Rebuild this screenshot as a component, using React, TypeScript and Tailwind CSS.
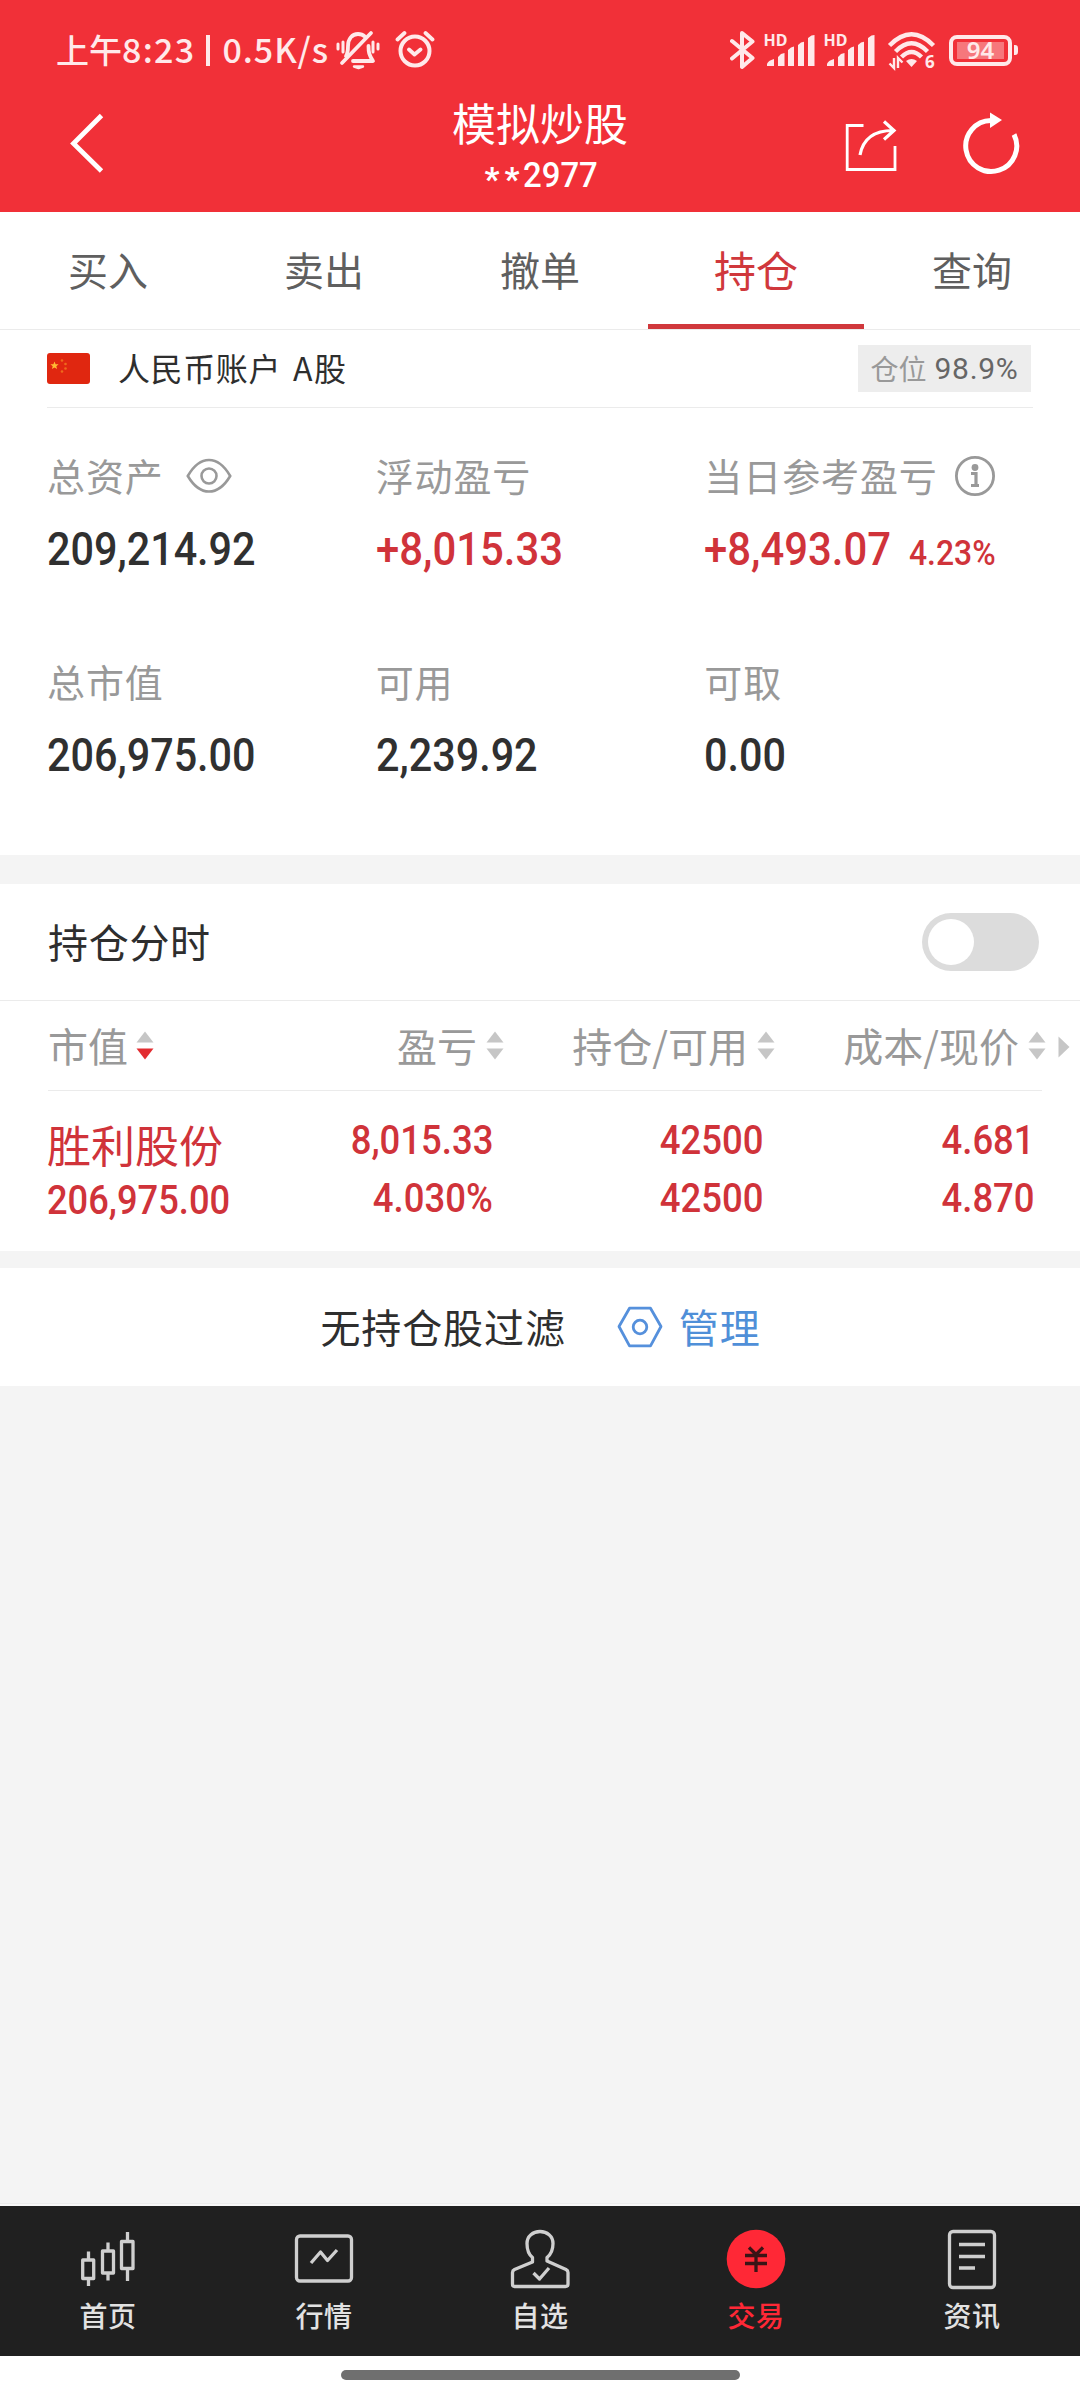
import type { ReactNode } from 'react';

const CJK = "font-['Noto_Sans_CJK_SC',sans-serif]";
const NUM = "font-[Roboto,'Noto_Sans_CJK_SC',sans-serif]";

function StatusBar() {
  return (
    <div className="flex h-[100px] items-center pl-[56px] pr-[62px] text-[#ffe9ea]">
      <div className="-mt-[2px] flex h-[50px] w-[273px] items-center whitespace-nowrap text-[34px] leading-[50px] font-medium">
        <span className="text-[33px]">上午</span>
        <span className="tracking-[1.300px]">8:23</span>
        <span className="mt-[2px] ml-[11px] h-[31px] w-[4px] bg-[#ffe9ea]" />
        <span className="ml-auto tracking-[0.900px]">0.5K/s</span>
      </div>
      <svg className="ml-[7px] h-[40px] w-[44px]" viewBox="0 0 44 40" fill="none" stroke="currentColor" strokeWidth="3.800" strokeLinecap="round" strokeLinejoin="round">
        <path d="M2 14v5M7 12v10M37 12v10M42 14v5" strokeWidth="3" />
        <path d="M10 26c2-3 2-6 2-10 0-7 4-12 10-12 3 0 5 .8 7 2.600" />
        <path d="M32.500 16c0 6 .5 9 4.500 15H17" />
        <path d="M35 3L6 33" />
        <path d="M18 36.500h9l-4.500 1.500z" strokeWidth="2.400" fill="currentColor" />
      </svg>
      <svg className="ml-[15px] h-[40px] w-[40px]" viewBox="0 0 40 40" fill="none" stroke="currentColor" strokeWidth="4" strokeLinecap="round" strokeLinejoin="round">
        <circle cx="20" cy="21" r="14.500" />
        <path d="M14 19.500l5.500 5 6-5M2.500 9.500l7-6.500M37.500 9.500l-7-6.500" strokeWidth="3.800" />
      </svg>
      <svg className="ml-auto h-[40px] w-[25px]" viewBox="0 0 25 40" fill="none" stroke="currentColor" strokeWidth="4" strokeLinecap="round" strokeLinejoin="round">
        <path d="M2 11l20.500 17L12 37V3l10.500 8.500L2 28.500" />
      </svg>
      <Signal className="ml-[10px]" />
      <Signal className="ml-[9px]" />
      <svg className="ml-[12px] h-[40px] w-[48px] overflow-visible" viewBox="0 0 48 40" fill="none" stroke="currentColor" strokeWidth="4.400">
        <path d="M1.500 15.500Q23.500-7 45.500 15.500" />
        <path d="M7.500 21.500Q23.500 5 39.500 21.500" />
        <path d="M13.500 27Q23.500 17 33.500 27" />
        <path d="M18 31Q23.500 27 29 31L23.500 37z" fill="currentColor" stroke="none" />
        <path d="M6 28v10L1.500 33.500M10 38V28l4.500 4.500" strokeWidth="2.400" />
        <text x="37" y="38" fontSize="17" fontWeight="700" fill="currentColor" stroke="none" fontFamily="Noto Sans">6</text>
      </svg>
      <div className="ml-[13px] flex h-[31px] w-[63px] items-center justify-center rounded-[8px] border-[4px] border-[#ffe9ea]">
        <span className="flex h-[17px] w-[47px] items-center justify-center bg-[#f6777c] font-['Noto_Sans',sans-serif] text-[24px] leading-none font-semibold">94</span>
      </div>
      <span className="ml-[2px] h-[10px] w-[4px] rounded-r-[3px] bg-[#ffe9ea]" />
    </div>
  );
}

function Signal({ className }: { className: string }) {
  return (
    <svg className={`${className} h-[40px] w-[51px] overflow-visible`} viewBox="0 0 51 40" fill="currentColor">
      <text x="-1.500" y="16" fontSize="16" fontWeight="700" fontFamily="Noto Sans">HD</text>
      <path d="M2 36V34q1-3.500 7-5v7zM13 36V27l3-3 3.500-1v13zM23 36V20l3-2.500 3-1V36zM33 36V15l3-2.500 3-.8V36zM43 36V8l3.500-2.500L49.500 5v31z" />
    </svg>
  );
}

function Header() {
  return (
    <header className="flex h-[212px] flex-col bg-[#f13038]">
      <StatusBar />
      <div className="flex h-[112px] pr-[59px] pl-[68px] text-white">
        <svg className="mt-[12px] h-[64px] w-[38px]" viewBox="0 0 38 64" fill="none" stroke="currentColor" strokeWidth="4.800">
          <path d="M33.500 3.500L5.500 31.500l28 27.500" />
        </svg>
        <div className="ml-[331px] w-[206px] text-center">
          <div className="text-[44px] leading-[44px] whitespace-nowrap">模拟炒股</div>
          <div className="mt-[10px] flex items-center justify-center font-[Roboto,sans-serif] text-[35px] leading-[36px] font-medium">
            <span className="w-[38px] pt-[8px] text-left text-[33px] font-bold tracking-[5px]">**</span>
            <span className="w-[73px] origin-left scale-x-[.94]">2977</span>
          </div>
        </div>
        <div className="mt-[11px] ml-auto flex">
          <svg className="mt-[6px] h-[58px] w-[54px]" viewBox="0 0 54 58" fill="none" stroke="currentColor" strokeWidth="2.800">
            <path d="M20.500 8.500H4.200V52.500H52V29" />
            <path d="M17 38C20 22 31 13.500 50 13.500M41 4.500l10 9-10 9" strokeWidth="3.200" />
          </svg>
          <svg className="ml-[64px] h-[66px] w-[60px]" viewBox="0 0 60 66" fill="none" stroke="currentColor" strokeWidth="5">
            <path d="M30 9.500A25.500 25.500 0 1 0 53 23.500" />
            <path d="M29 1.500L41 9 29 17z" fill="currentColor" stroke="none" />
          </svg>
        </div>
      </div>
    </header>
  );
}

function Tabs() {
  return (
    <nav className="grid h-[118px] grid-cols-5 border-b border-[#ebebeb] bg-white text-center text-[40px] leading-[115px] text-[#5f5f5f]">
      <span>买入</span>
      <span>卖出</span>
      <span>撤单</span>
      <span className="h-[117px] border-b-[5px] border-[#d0383c] text-[42px] leading-[113px] text-[#d0383c]">持仓</span>
      <span>查询</span>
    </nav>
  );
}

function AccountRow() {
  return (
    <div className="mx-[47px] flex h-[78px] items-center border-b border-[#ebebeb] text-[32px] text-[#2e2e2e]">
      <svg className="h-[31px] w-[43px]" viewBox="0 0 43 31">
        <rect width="43" height="31" rx="3" fill="#e02710" />
        <path d="M7.500 8.500l1.100 2.700 3 .1-2.300 1.900.8 2.900-2.600-1.600-2.600 1.600.8-2.900-2.300-1.900 3-.1z" fill="#fb3" />
        <g fill="#ee6a1c">
          <circle cx="15" cy="7.500" r="1.300" />
          <circle cx="18.500" cy="11" r="1.300" />
          <circle cx="18.500" cy="15.500" r="1.300" />
          <circle cx="15" cy="18.500" r="1.300" />
        </g>
      </svg>
      <span className="-mt-[3px] ml-[28px] flex items-center gap-[12px] tracking-[0.600px]">
        <span>人民币账户</span>
        <span className="tracking-[1.500px]">A股</span>
      </span>
      <span className="ml-auto mr-[2px] flex h-[47px] w-[173px] items-center justify-center gap-[8px] bg-[#ededed] text-[28px]">
        <span className="-mt-[2px] text-[#999]">仓位</span>
        <span className={`${NUM} text-[30px] tracking-[0.700px] text-[#666]`}>98.9%</span>
      </span>
    </div>
  );
}

function Metric({ label, value, extra, icon, red }: { label: string; value: string; extra?: string; icon?: ReactNode; red?: boolean }) {
  return (
    <div>
      <div className="flex h-[56px] items-center whitespace-nowrap">
        <span className="-mt-[3px] text-[38px] leading-[56px] tracking-[0.900px] text-[#999]">{label}</span>
        {icon}
      </div>
      <div className={`${NUM} mt-[18px] flex h-[54px] items-baseline text-[46px] leading-[54px] font-medium whitespace-nowrap ${red ? 'text-[#d0333a]' : 'text-[#303030]'}`}>
        <span className={red ? 'origin-left scale-x-[.91]' : 'origin-left scale-x-[.898]'}>{value}</span>
        {extra && <span className="-ml-[1px] origin-left scale-x-[.91] text-[35px]">{extra}</span>}
      </div>
    </div>
  );
}

function Metrics() {
  return (
    <section className="h-[447px] px-[47px] pt-[40px]">
      <div className="grid grid-cols-3 gap-y-[78px]">
        <Metric
          label="总资产"
          value="209,214.92"
          icon={
            <svg className="ml-[22px] h-[36px] w-[46px]" viewBox="0 0 46 36" fill="none" stroke="#999" strokeWidth="2.600">
              <path d="M1.800 18Q11 2 23 2t21.200 16Q35 33.500 23 33.500T1.800 18z" />
              <circle cx="23" cy="18" r="7.500" />
            </svg>
          }
        />
        <Metric label="浮动盈亏" value="+8,015.33" red />
        <Metric
          label="当日参考盈亏"
          value="+8,493.07"
          extra="4.23%"
          red
          icon={
            <svg className="ml-[16px] h-[42px] w-[42px]" viewBox="0 0 42 42" fill="none" stroke="#999" strokeWidth="2.800">
              <circle cx="21" cy="21" r="18.600" />
              <circle cx="21" cy="12.500" r="3.400" fill="#999" stroke="none" />
              <path d="M17 18.500h5v12M17 30.500h8" strokeWidth="3.200" />
            </svg>
          }
        />
        <Metric label="总市值" value="206,975.00" />
        <Metric label="可用" value="2,239.92" />
        <Metric label="可取" value="0.00" />
      </div>
    </section>
  );
}

function SortLabel({ label, down }: { label: string; down?: boolean }) {
  return (
    <span className={`flex items-center ${down ? 'justify-start gap-[8px]' : 'justify-end gap-[9px]'}`}>
      <span className="-mt-[2px]">{label}</span>
      <svg className="h-[30px] w-[18px]" viewBox="0 0 18 30" fill="#c6c6c6">
        <path d="M9 0.500l8.500 11h-17z" />
        <path d="M9 28.500l8.500-11h-17z" fill={down ? '#e22c30' : '#c6c6c6'} />
      </svg>
    </span>
  );
}

function Cell({ top, bottom }: { top: string; bottom: string }) {
  return (
    <div className={`${NUM} flex flex-col items-end text-[41px] leading-[58px] font-medium`}>
      <span className="origin-right scale-x-[.89]">{top}</span>
      <span className="origin-right scale-x-[.89]">{bottom}</span>
    </div>
  );
}

function Holdings() {
  return (
    <section className="bg-white">
      <div className="flex h-[117px] items-center justify-between border-b border-[#ebebeb] pr-[41px] pl-[48px] text-[40px] tracking-[0.700px] text-[#2e2e2e]">
        <span className="-mt-[2px]">持仓分时</span>
        <span className="mb-[1px] flex h-[58px] w-[117px] items-center rounded-full bg-[#dcdcdc] pl-[6px]">
          <span className="size-[46px] rounded-full bg-white" />
        </span>
      </div>
      <div className="flex h-[90px]">
        <div className="ml-[48px] grid w-[994px] grid-cols-[182px_274px_271px_271px] items-center border-b border-[#ebebeb] text-[40px] whitespace-nowrap text-[#999]">
          <SortLabel label="市值" down />
          <SortLabel label="盈亏" />
          <SortLabel label="持仓/可用" />
          <SortLabel label="成本/现价" />
        </div>
        <svg className="mt-[35px] ml-[16px] h-[22px] w-[12px]" viewBox="0 0 12 22" fill="#c6c6c6">
          <path d="M0.500 0.500L11.500 11 0.500 21.500z" />
        </svg>
      </div>
      <div className="grid h-[160px] grid-cols-[181px_265px_271px_271px] pt-[20px] pl-[47px] text-[#d0333a]">
        <div className="flex flex-col items-start whitespace-nowrap">
          <span className="mt-[4px] text-[44px] leading-[58px]">胜利股份</span>
          <span className={`${NUM} -mt-[2px] origin-left scale-x-[.885] text-[41px] leading-[58px] font-medium`}>206,975.00</span>
        </div>
        <Cell top="8,015.33" bottom="4.030%" />
        <Cell top="42500" bottom="42500" />
        <Cell top="4.681" bottom="4.870" />
      </div>
    </section>
  );
}

function FilterRow() {
  return (
    <div className="flex h-[118px] items-center justify-center bg-white pl-[1px] text-[40px] leading-[118px] tracking-[0.900px] text-[#2e2e2e]">
      <span className="-mt-[2px]">无持仓股过滤</span>
      <svg className="ml-[51px] h-[42px] w-[46px]" viewBox="0 0 46 42" fill="none" stroke="#5590dc" strokeWidth="2.800">
        <path d="M12.500 2.200h21L44 20.500 33.500 39.800h-21L2 20.500z" strokeLinejoin="round" />
        <circle cx="23" cy="21" r="6.800" />
      </svg>
      <span className="-mt-[2px] ml-[16px] text-[#4f8fd8]">管理</span>
    </div>
  );
}

function NavItem({ label, active, children }: { label: string; active?: boolean; children: ReactNode }) {
  return (
    <div className={`flex flex-col items-center ${active ? 'text-[#ff2836]' : 'text-[#cfcfcf]'}`}>
      <svg className="mt-[21px] size-[64px]" viewBox="0 0 64 64" fill="none" stroke="currentColor" strokeWidth="3.300" strokeLinejoin="round">
        {children}
      </svg>
      <span className={`mt-[4px] text-[28px] leading-[40px] font-medium tracking-[0.500px] ${active ? '' : 'text-[#e2e2e2]'}`}>{label}</span>
    </div>
  );
}

function BottomNav() {
  return (
    <nav className="grid h-[150px] grid-cols-5 bg-[#202020]">
      <NavItem label="首页">
        <path d="M6.700 33h11v18.500h-11zM26.500 24h11v22h-11zM45.500 14.500h11.500v27H45.500zM12.500 24.500V33M12.500 51v8M32 15.500V24M32 46v7.500M51.500 5v9.500M51.500 41.500v12.500" />
      </NavItem>
      <NavItem label="行情">
        <rect x="4.500" y="9" width="55" height="45" rx="3.500" />
        <path d="M19 36l9.500-11 7 8.500L45 23" />
      </NavItem>
      <NavItem label="自选">
        <path d="M24.500 30.500C20 27 19 22 19 16.500 19 9 25 4.500 32 4.500S45 9 45 16.500c0 5.500-1.500 10.500-6 14v3.500l19 8.500q2 1 2 3V57q0 2.500-2.500 2.500H6.500Q4.500 59.500 4.500 57V45.500q0-2 2-3L24.500 35z" />
        <path d="M25.500 46l6 6 9.500-11" />
      </NavItem>
      <NavItem label="交易" active>
        <circle cx="32" cy="32" r="29.300" fill="currentColor" stroke="none" />
        <path d="M25 20.500l7 7 7-7M21 28.500h22M21 36.500h22M32 27v18" stroke="#3a1416" strokeWidth="3.300" />
      </NavItem>
      <NavItem label="资讯">
        <rect x="9.500" y="4.500" width="45" height="56" rx="3.500" />
        <path d="M19 17.500h26M19 29.500h26M19 41h16" />
      </NavItem>
    </nav>
  );
}

export default function App() {
  return (
    <main className={`${CJK} flex h-[2400px] w-[1080px] flex-col overflow-hidden bg-[#f4f4f4]`}>
      <Header />
      <div className="bg-white">
        <Tabs />
        <AccountRow />
        <Metrics />
      </div>
      <div className="h-[29px]" />
      <Holdings />
      <div className="h-[17px]" />
      <FilterRow />
      <div className="mt-auto h-[3px] border-t border-[#ececec] bg-[#f8f8f8]" />
      <BottomNav />
      <div className="flex h-[44px] justify-center bg-white pt-[14px]">
        <span className="h-[10px] w-[399px] rounded-full bg-[#6f6f6f]" />
      </div>
    </main>
  );
}
